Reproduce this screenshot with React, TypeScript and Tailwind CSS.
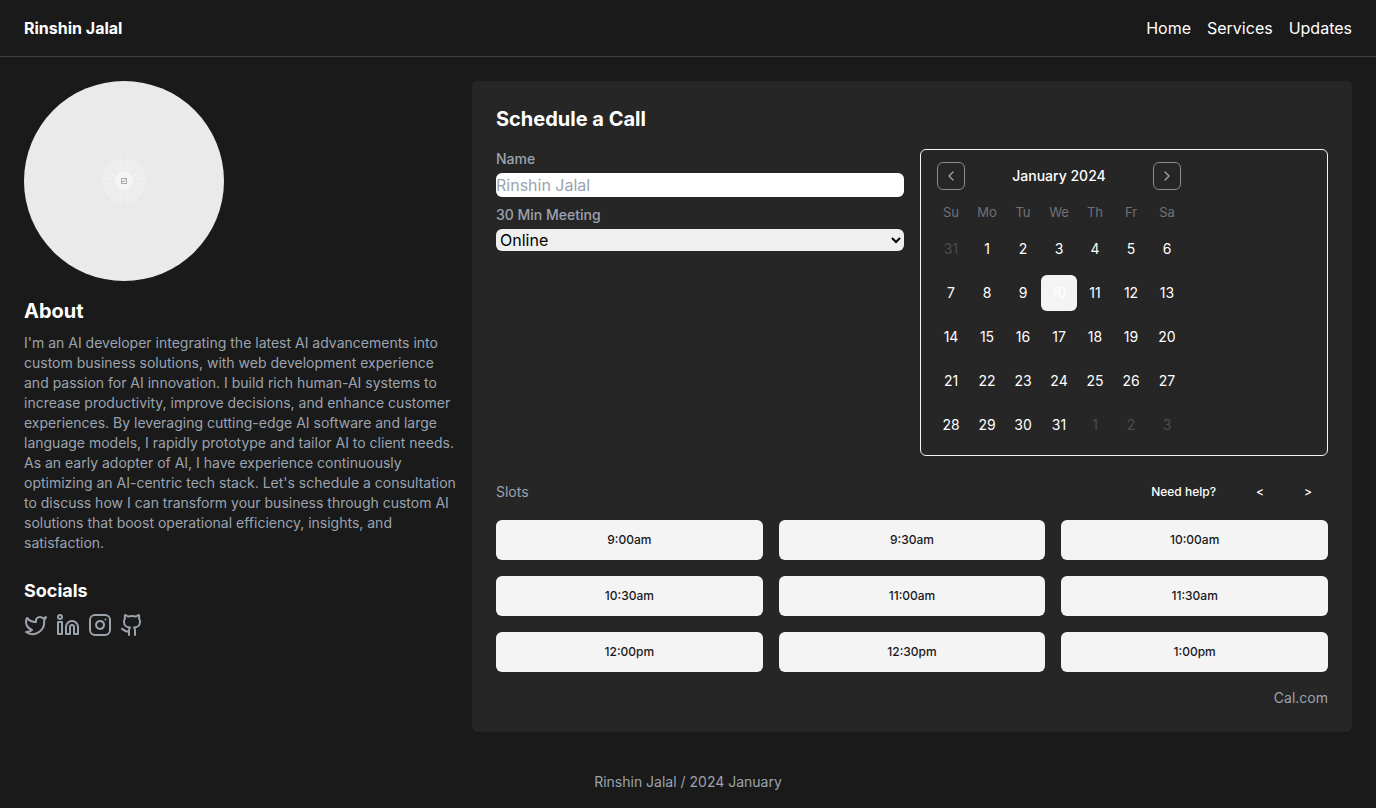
import React from "react";
import { Twitter, Linkedin, Instagram, Github, ChevronLeft, ChevronRight } from "lucide-react";

const weekdays = ["Su", "Mo", "Tu", "We", "Th", "Fr", "Sa"];

type Day = { date: number; outside: boolean };

const days: Day[] = [
  { date: 31, outside: true },
  ...Array.from({ length: 31 }, (_, i) => ({ date: i + 1, outside: false })),
  ...[1, 2, 3].map((date) => ({ date, outside: true })),
];

const weeks = Array.from({ length: 5 }, (_, i) => days.slice(i * 7, i * 7 + 7));

const slots = [
  "9:00am", "9:30am", "10:00am",
  "10:30am", "11:00am", "11:30am",
  "12:00pm", "12:30pm", "1:00pm",
];

const socials = [
  { name: "Twitter", Icon: Twitter },
  { name: "LinkedIn", Icon: Linkedin },
  { name: "Instagram", Icon: Instagram },
  { name: "GitHub", Icon: Github },
];

function Avatar() {
  return (
    <svg viewBox="0 0 200 200" role="img" aria-label="Rinshin Jalal" className="size-[200px] rounded-full bg-[#eaeaea]">
      <g stroke="#e5e5e5" strokeWidth="1">
        <path d="M100 72v56M72 100h56M80 80l40 40M120 80l-40 40" />
      </g>
      <circle cx="100" cy="100" r="22" fill="#eeeeee" />
      <path d="M100 78v44M78 100h44M84 84l32 32M116 84l-32 32" stroke="#eaeaea" strokeWidth="1.5" />
      <circle cx="100" cy="100" r="9" fill="#f5f5f5" />
      <rect x="97.5" y="97.5" width="5" height="5" fill="none" stroke="#a9a9a9" strokeWidth="1" />
      <path d="M98 100.5h2l2-2" stroke="#a0a0a0" strokeWidth="1" fill="none" />
    </svg>
  );
}

function Profile() {
  return (
    <section>
      <Avatar />
      <h2 className="mt-4 text-xl font-bold">About</h2>
      <p className="mt-2 text-sm text-[#9ca3af]">
        I'm an AI developer integrating the latest AI advancements into custom business solutions, with web
        development experience and passion for AI innovation. I build rich human-AI systems to increase
        productivity, improve decisions, and enhance customer experiences. By leveraging cutting-edge AI software
        and large language models, I rapidly prototype and tailor AI to client needs. As an early adopter of AI, I
        have experience continuously optimizing an AI-centric tech stack. Let's schedule a consultation to discuss
        how I can transform your business through custom AI solutions that boost operational efficiency, insights,
        and satisfaction.
      </p>
      <h3 className="mt-6 text-lg font-bold">Socials</h3>
      <div className="mt-2 flex gap-2 text-[#9ca3af]">
        {socials.map(({ name, Icon }) => (
          <a key={name} href="#" aria-label={name}>
            <Icon size={24} />
          </a>
        ))}
      </div>
    </section>
  );
}

function Calendar() {
  const navButton = "flex size-7 items-center justify-center rounded-md border border-[#8c8c8c] text-[#a0a0a0]";
  return (
    <div className="rounded-md border border-[#f4f4f5] p-3">
      <div className="w-[252px]">
        <div className="flex items-center justify-between px-1">
          <button type="button" aria-label="Previous month" className={navButton}>
            <ChevronLeft size={16} />
          </button>
          <span className="text-sm font-medium">January 2024</span>
          <button type="button" aria-label="Next month" className={navButton}>
            <ChevronRight size={16} />
          </button>
        </div>
        <table className="mt-3 w-full table-fixed border-collapse text-center">
          <thead>
            <tr>
              {weekdays.map((day) => (
                <th key={day} scope="col" className="p-0 text-[13px] leading-[21px] font-normal text-[#71717a]">
                  {day}
                </th>
              ))}
            </tr>
          </thead>
          <tbody>
            {weeks.map((week, i) => (
              <tr key={i}>
                {week.map(({ date, outside }) => {
                  const selected = date === 10;
                  return (
                    <td key={date} className="p-0 pt-2">
                      <button
                        type="button"
                        aria-pressed={selected}
                        className={
                          selected
                            ? "block size-9 rounded-md bg-[#f4f4f5] text-sm text-white"
                            : outside
                              ? "block size-9 rounded-md text-sm text-[#4b4b50]"
                              : "block size-9 rounded-md text-sm text-white"
                        }
                      >
                        {date}
                      </button>
                    </td>
                  );
                })}
              </tr>
            ))}
          </tbody>
        </table>
      </div>
    </div>
  );
}

function Scheduler() {
  return (
    <section className="col-span-2 rounded-md bg-[#262626] p-6">
      <h2 className="mb-4 text-xl font-bold">Schedule a Call</h2>
      <div className="grid grid-cols-2 gap-4">
        <div className="flex flex-col gap-2">
          <div className="flex flex-col gap-1">
            <label htmlFor="name" className="text-sm font-medium text-[#9ca3af]">Name</label>
            <input
              id="name"
              type="text"
              placeholder="Rinshin Jalal"
              className="h-6 w-full rounded-md bg-white text-black placeholder:text-[#9ca3af]"
            />
          </div>
          <div className="flex flex-col gap-1">
            <label htmlFor="meeting" className="text-sm font-medium text-[#9ca3af]">30 Min Meeting</label>
            <select id="meeting" className="h-[22px] w-full rounded-md bg-[#efefef] text-black">
              <option>Online</option>
              <option>In person</option>
            </select>
          </div>
        </div>
        <Calendar />
      </div>
      <div className="mt-4 flex items-center justify-between">
        <span className="text-sm text-[#9ca3af]">Slots</span>
        <div className="flex gap-2 text-xs font-medium">
          <button type="button" className="h-10 px-4">Need help?</button>
          <button type="button" aria-label="Previous slots" className="h-10 px-4">&lt;</button>
          <button type="button" aria-label="Next slots" className="h-10 px-4">&gt;</button>
        </div>
      </div>
      <div className="mt-2 grid grid-cols-3 gap-4">
        {slots.map((slot) => (
          <button key={slot} type="button" className="h-10 rounded-md bg-[#f4f4f5] text-xs font-medium text-[#18181b]">
            {slot}
          </button>
        ))}
      </div>
      <p className="mt-4 text-right text-sm text-[#9ca3af]">Cal.com</p>
    </section>
  );
}

export default function App() {
  return (
    <div className="min-h-screen bg-[#1a1a1a] font-['Inter',sans-serif] text-white">
      <header className="flex items-center justify-between border-b border-[#3f3f4a] px-6 py-4">
        <h1 className="font-bold">Rinshin Jalal</h1>
        <nav className="flex gap-4">
          <a href="#">Home</a>
          <a href="#">Services</a>
          <a href="#">Updates</a>
        </nav>
      </header>
      <main className="grid grid-cols-3 gap-4 p-6">
        <Profile />
        <Scheduler />
      </main>
      <footer className="p-4 text-center text-sm text-[#9ca3af]">Rinshin Jalal / 2024 January</footer>
    </div>
  );
}
